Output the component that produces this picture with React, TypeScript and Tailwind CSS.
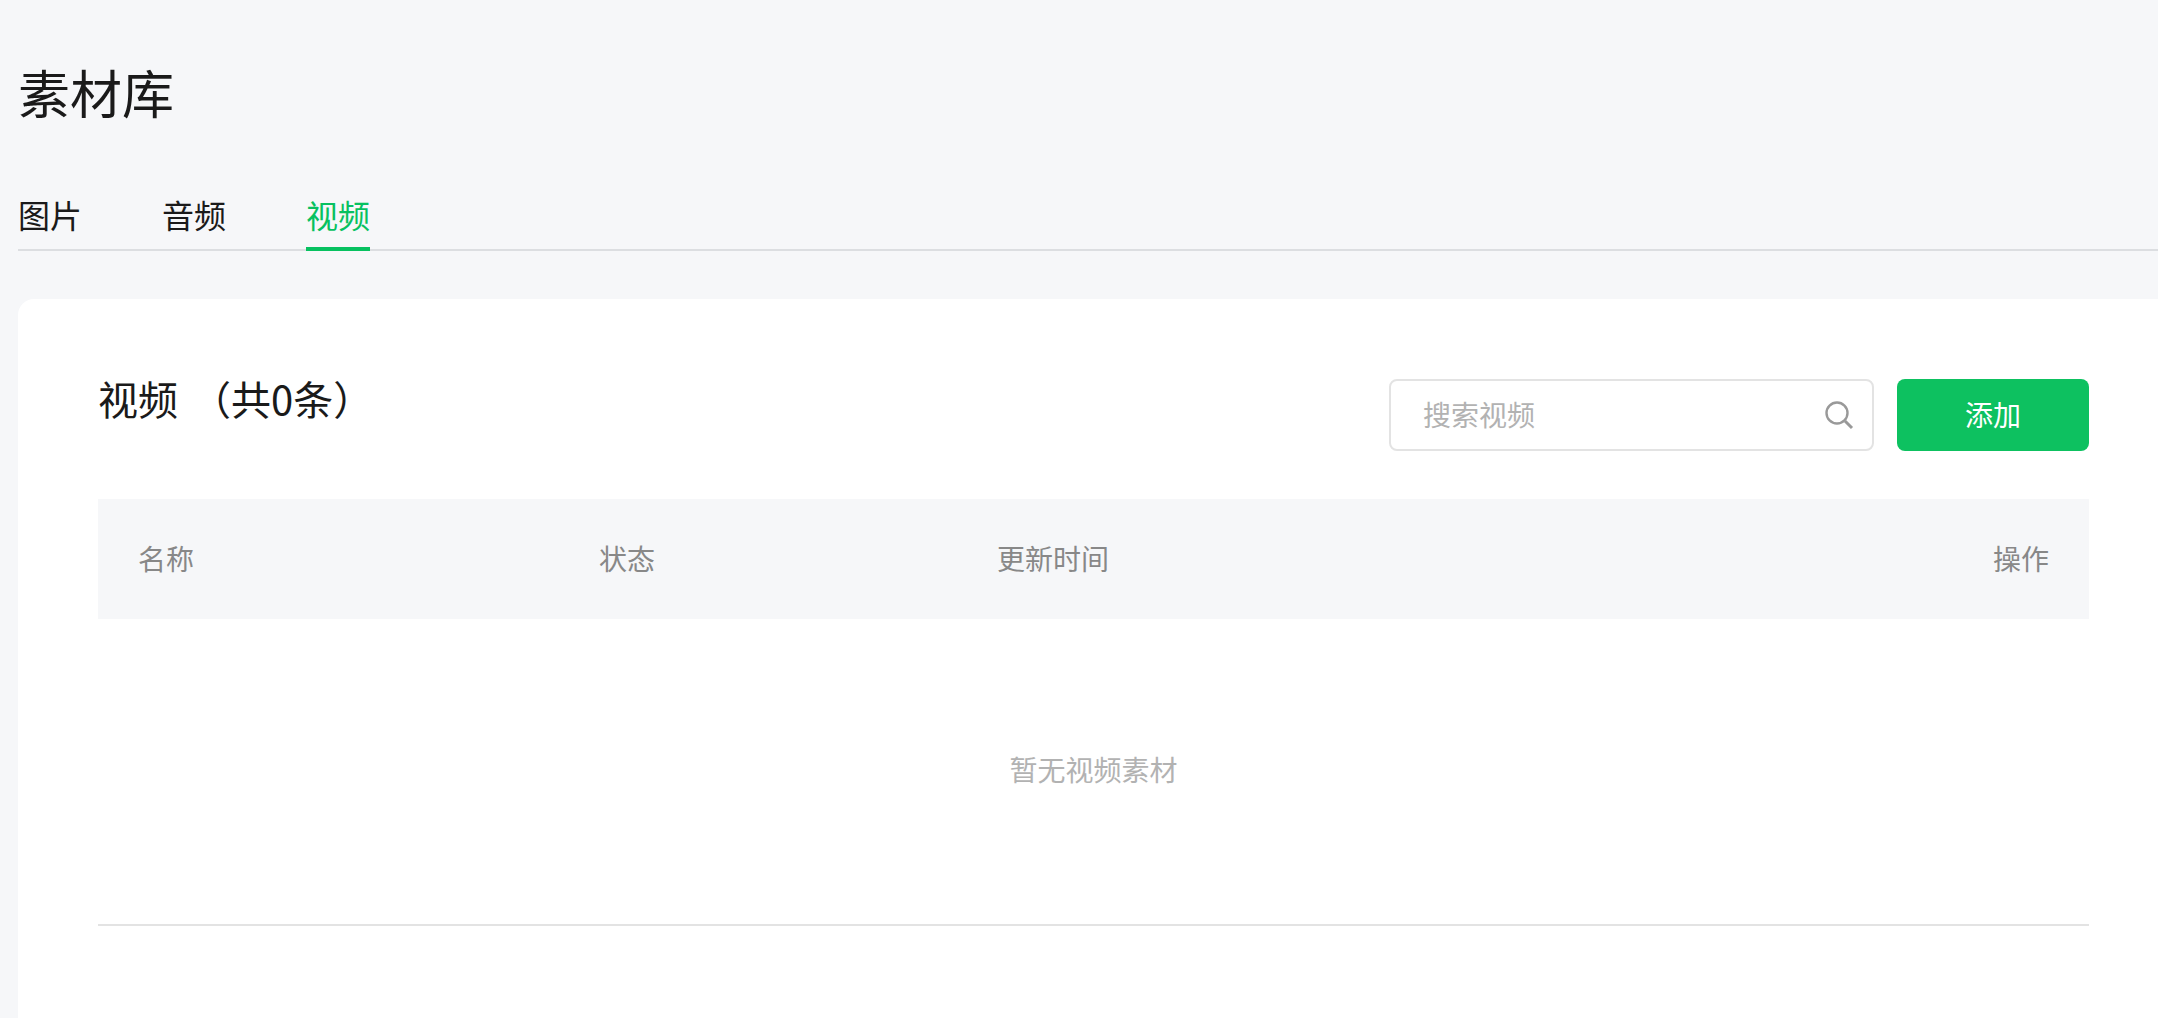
export default function App() {
  return (
    <div className="min-h-screen overflow-hidden bg-[#f6f7f9] pl-[18px] pt-[57px] text-[#1a1a1a] font-['Noto_Sans_CJK_SC','Noto_Sans',sans-serif]">
      {/* title */}
      <h1 className="text-[52px] leading-[70px] font-normal">素材库</h1>

      {/* tabs */}
      <div className="mt-[64px] flex h-[60px] gap-20 border-b-2 border-[#dcdee1]">
        <div className="h-[60px] text-[32px] leading-[46px]">图片</div>
        <div className="h-[60px] text-[32px] leading-[46px]">音频</div>
        <div className="h-[60px] border-b-4 border-[#07c160] text-[32px] leading-[46px] text-[#07c160]">视频</div>
      </div>

      {/* card */}
      <div className="mt-12 h-[760px] rounded-tl-2xl bg-white pl-20 pr-[69px] pt-20">
        <div className="flex h-[72px] items-start justify-between">
          <div className="text-[40px] leading-[38px]">
            视频 <span className="ml-1">（共0条）</span>
          </div>
          <div className="flex gap-[23px]">
            <div className="flex h-[72px] w-[485px] items-center justify-between rounded-lg border-2 border-[#e3e3e3] pl-[32px] pr-[18px]">
              <span className="pb-[2px] text-[28px] text-[#b2b2b2]">搜索视频</span>
              <svg width="30" height="30" viewBox="0 0 30 30" fill="none" stroke="#999999" strokeWidth="2.4">
                <circle cx="13" cy="13" r="10.5" />
                <path d="M21 21l7 7" strokeWidth="3" />
              </svg>
            </div>
            <button className="h-[72px] w-[192px] rounded-lg bg-[#0dc160] pb-[2px] text-[28px] text-white">添加</button>
          </div>
        </div>

        <div className="mt-[48px] grid h-[120px] grid-cols-[461px_398px_1fr_auto] items-center bg-[#f6f7f9] px-10 pb-[2px] text-[28px] text-[#888888]">
          <div>名称</div>
          <div>状态</div>
          <div>更新时间</div>
          <div>操作</div>
        </div>

        <div className="flex h-[307px] items-center justify-center border-b-2 border-[#e3e3e3] pb-[6px] text-[28px] text-[#b2b2b2]">
          暂无视频素材
        </div>
      </div>
    </div>
  );
}
